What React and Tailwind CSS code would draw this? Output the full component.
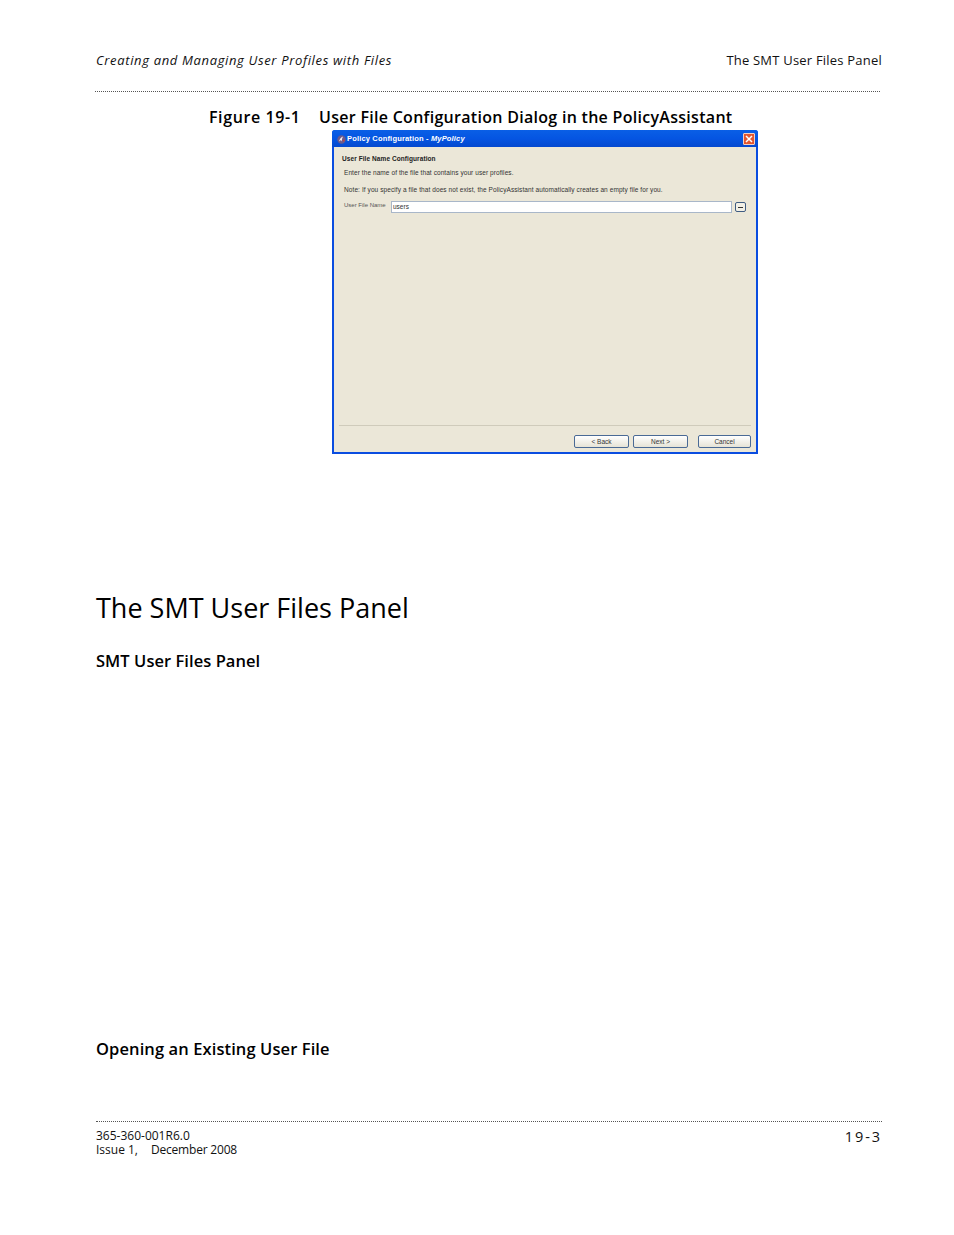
const pageFont = { fontFamily: '"Open Sans", "Noto Sans", sans-serif' };

function XpButton({ label, className = "" }) {
  return (
    <div className={`flex h-[13px] items-center justify-center rounded-[2px] border border-[#4a6a95] bg-gradient-to-b from-white to-[#e6e3d6] text-[6.5px] text-[#333] ${className}`}>
      {label}
    </div>
  );
}

function Dialog() {
  return (
    <div className="flex h-[324px] w-[426px] flex-col rounded-t-[3px] bg-[#0a4de0] font-['Liberation_Sans',sans-serif]">
      <div className="flex h-[17px] shrink-0 items-center justify-between rounded-t-[3px] bg-gradient-to-b from-[#0a5fe6] via-[#0555e2] to-[#0449cf] pl-[5px] pr-[3px]">
        <div className="flex items-center gap-[1px] pt-px">
          <svg width="9" height="9" viewBox="0 0 9 9">
            <circle cx="4.5" cy="4.5" r="4.2" fill="#6a5a8c" />
            <path d="M2 6.5 Q3 2.5 6 1.5 Q4.5 4 5 6.5 L4 5 Z" fill="#f5eeee" />
            <circle cx="6.6" cy="5.6" r="0.9" fill="#c9403a" />
          </svg>
          <span className="text-[7.5px] font-bold leading-none tracking-[0.17px] text-white">
            Policy Configuration - <span className="italic">MyPolicy</span>
          </span>
        </div>
        <div className="flex h-[12px] w-[12px] items-center justify-center rounded-[1px] border border-[#f4d0c0] bg-[#e2562f]">
          <svg width="8" height="8" viewBox="0 0 8 8">
            <path d="M1 1 L7 7 M7 1 L1 7" stroke="#fff" strokeWidth="1.5" />
          </svg>
        </div>
      </div>

      <div className="mx-[2px] mb-[2px] flex min-h-0 flex-1 flex-col bg-[#ebe7d8] text-[#333]">
        <div className="pl-[8px] pt-[7px] text-[6.5px] font-bold leading-[9px] tracking-[0.08px] text-[#222]">
          User File Name Configuration
        </div>
        <div className="pl-[10px] pt-[5px] text-[6.5px] leading-[9px] tracking-[0.08px]">
          Enter the name of the file that contains your user profiles.
        </div>
        <div className="pl-[10px] pt-[8px] text-[6.5px] leading-[9px] tracking-[0.09px]">
          Note: If you specify a file that does not exist, the PolicyAssistant automatically creates an empty file for you.
        </div>
        <div className="flex items-start pl-[10px] pr-[10px] pt-[6px]">
          <span className="w-[47px] shrink-0 pt-px text-[6px] leading-[9px] text-[#555]">User File Name</span>
          <div className="mt-[1px] flex h-[12px] flex-1 items-center border border-[#a9b7c9] bg-white pl-[1px] text-[6.5px] text-[#333]">
            users
          </div>
          <div className="ml-[3px] mt-[2px] flex h-[10px] w-[11px] items-center justify-center rounded-[2px] border border-[#3f5c82] bg-[#f2f0e6]">
            <div className="h-px w-[5px] bg-[#333]" />
          </div>
        </div>
        <div className="mt-auto mx-[5px] border-t border-[#cfcbbb]" />
        <div className="flex justify-end pb-[4px] pr-[5px] pt-[9px]">
          <XpButton label="< Back" className="w-[55px]" />
          <XpButton label="Next >" className="ml-[4px] w-[55px]" />
          <XpButton label="Cancel" className="ml-[10px] w-[53px]" />
        </div>
      </div>
    </div>
  );
}

export default function App() {
  return (
    <div style={pageFont} className="h-[1235px] w-[954px] bg-white pl-[96px] pr-[72px] text-[#111]">
      <div className="flex items-baseline justify-between pt-[52px] text-[13px] leading-[17px]">
        <span className="italic tracking-[0.65px]">Creating and Managing User Profiles with Files</span>
        <span className="tracking-[0.21px]">The SMT User Files Panel</span>
      </div>
      <div className="-ml-px mr-[2px] mt-[22px] border-t border-dotted border-[#555]" />

      <div className="flex pl-[113px] pt-[15px] text-[16px] font-semibold leading-[21px] text-black">
        <span className="w-[110px] tracking-[0.6px]">Figure 19-1</span>
        <span className="tracking-[0.29px]">User File Configuration Dialog in the PolicyAssistant</span>
      </div>
      <div className="pl-[236px] pt-[2px]">
        <Dialog />
      </div>

      <h1 className="pt-[133px] text-[27px] font-normal leading-[42px] text-black">The SMT User Files Panel</h1>
      <h2 className="pt-[21px] text-[16.5px] font-semibold leading-[22px] tracking-[0.05px] text-black">SMT User Files Panel</h2>
      <h2 className="pt-[366px] text-[16.5px] font-semibold leading-[22px] tracking-[0.1px] text-black">Opening an Existing User File</h2>

      <div className="mt-[61px] border-t border-dotted border-[#555]" />
      <div className="flex items-start justify-between pt-[7px]">
        <div className="text-[12px] leading-[14px]">
          <div>365-360-001R6.0</div>
          <div>Issue 1,<span className="ml-[13px] tracking-[-0.2px]">December 2008</span></div>
        </div>
        <div className="text-[14.5px] leading-[16px] tracking-[1.9px]">19-3</div>
      </div>
    </div>
  );
}
